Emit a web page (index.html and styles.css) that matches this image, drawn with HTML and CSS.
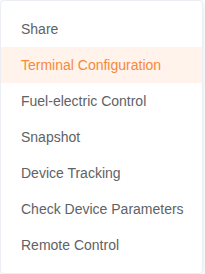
FILE: index.html
```html
<!DOCTYPE html>
<html>
<head>
  <title>Menu</title>
  <link rel="stylesheet" href="styles.css">
</head>
<body>
  <ul class="menu">
    <li class="item">Share</li>
    <li class="item active">Terminal Configuration</li>
    <li class="item">Fuel-electric Control</li>
    <li class="item">Snapshot</li>
    <li class="item">Device Tracking</li>
    <li class="item">Check Device Parameters</li>
    <li class="item">Remote Control</li>
  </ul>
</body>
</html>
```
FILE: styles.css
```css
body {
  margin: 0;
  background: #ffffff;
  font-family: "Liberation Sans", Arial, sans-serif;
}

.menu {
  list-style: none;
  margin: 0;
  padding: 10px 0;
  width: 203px;
  box-sizing: border-box;
  background: #ffffff;
  border: 1px solid #ebeef5;
  border-radius: 4px;
  box-shadow: 0 2px 12px 0 rgba(0, 0, 0, 0.1);
}

.item {
  line-height: 36px;
  padding: 0 20px;
  font-size: 14px;
  color: #606266;
  cursor: pointer;
  white-space: nowrap;
}

.item.active {
  background: #fff3eb;
  color: #f7883d;
}
```
